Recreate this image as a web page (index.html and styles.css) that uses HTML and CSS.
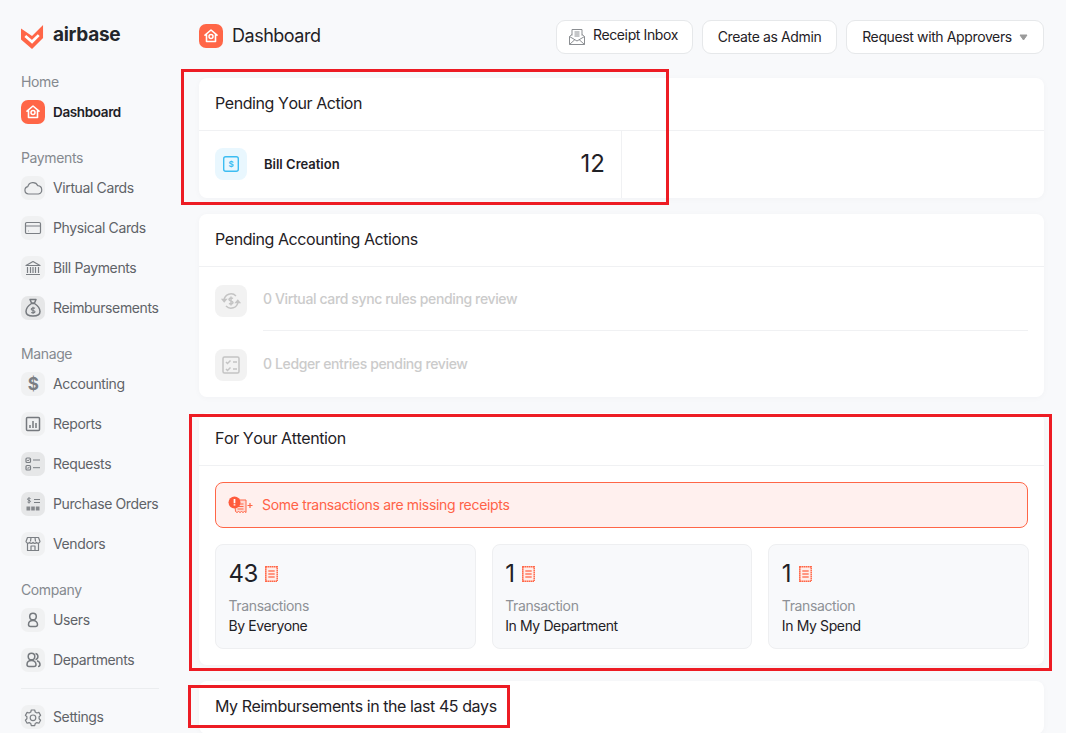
FILE: index.html
```html
<!DOCTYPE html>
<html lang="en">
<head>
<meta charset="utf-8">
<title>Airbase Dashboard</title>
<link rel="stylesheet" href="styles.css">
</head>
<body>
<svg class="defs" width="0" height="0" aria-hidden="true">
  <defs>
    <symbol id="i-home" viewBox="0 0 24 24">
      <path d="M6 11.2 12 6l6 5.200M7.500 10.500V17.500H16.500V10.500" fill="none" stroke="#fff" stroke-width="1.600" stroke-linejoin="round" stroke-linecap="round"/>
      <circle cx="12" cy="12.500" r="2" fill="none" stroke="#fff" stroke-width="1.500"/>
    </symbol>
    <symbol id="i-receipt" viewBox="0 0 13 16">
      <path d="M.8.8h11.400v14.400H.8Z" fill="#ffeeea" stroke="#ff6647" stroke-width="1.500" stroke-dasharray="1.600 .4"/>
      <path d="M3.300 5h6.400M3.300 8h6.400M3.300 11h6.400" stroke="#ff7a5f" stroke-width="1.300" fill="none"/>
    </symbol>
  </defs>
</svg>
<div class="app">
  <aside class="sidebar">
    <div class="brand">
      <svg class="brand-mark" viewBox="0 0 24 26"><path d="M0 3.500 11.500 11.500 23 0V13.500L11.500 25 0 15Z" fill="#ff6647"/><path d="M4.500 11.500 11.500 17.500 18.500 10.500" fill="none" stroke="#fff" stroke-width="2.800"/></svg>
      <span class="brand-name">airbase</span>
    </div>

    <div class="nav-label">Home</div>
    <a class="nav-item active"><span class="nav-icon accent"><svg viewBox="0 0 24 24"><use href="#i-home"/></svg></span>Dashboard</a>

    <div class="nav-label spaced">Payments</div>
    <a class="nav-item"><span class="nav-icon"><svg viewBox="0 0 24 24"><path d="M7.500 18a3.700 3.700 0 0 1-.7-7.300 5.300 5.300 0 0 1 10-1 4.200 4.200 0 0 1 .6 8.300Z"/></svg></span>Virtual Cards</a>
    <a class="nav-item"><span class="nav-icon"><svg viewBox="0 0 24 24"><rect x="4.500" y="6.500" width="15" height="11" rx="1.200"/><path d="M4.500 10h15M7 15h.6"/></svg></span>Physical Cards</a>
    <a class="nav-item"><span class="nav-icon"><svg viewBox="0 0 24 24"><path d="M5 9.500 12 5.500l7 4ZM6.500 11v6M9.500 11v6M12 11v6M14.500 11v6M17.500 11v6M5 18.500h14"/></svg></span>Bill Payments</a>
    <a class="nav-item"><span class="nav-icon dark"><svg class="bold" viewBox="0 0 24 24"><path d="M9 3.500h6l-1.500 3.500h-3ZM10.500 7.500C7.500 9.500 5 12.500 5 15.500c0 3 2.500 4.500 7 4.500s7-1.500 7-4.500c0-3-2.500-6-5.500-8Z"/><path d="M14 12.300c-1.500-.8-3.800-.3-3.800.9 0 1.700 3.800.9 3.800 2.600 0 1.100-2.200 1.500-3.800.7M12 10.800v7" stroke-width="1.100"/></svg></span>Reimbursements</a>

    <div class="nav-label spaced">Manage</div>
    <a class="nav-item"><span class="nav-icon"><span class="dollar">$</span></span>Accounting</a>
    <a class="nav-item"><span class="nav-icon"><svg class="bold" viewBox="0 0 24 24"><rect x="5.500" y="5.500" width="13" height="13" rx="1"/><path d="M9 16v-3M12 16V9M15 16v-5"/></svg></span>Reports</a>
    <a class="nav-item"><span class="nav-icon dark"><svg viewBox="0 0 24 24"><rect x="5" y="6" width="4.500" height="4.500" rx="1"/><rect x="5" y="13.500" width="4.500" height="4.500" rx="1"/><path d="M6.200 8.200l.8.800 1.400-1.600M6.200 15.700l.8.800 1.400-1.600M12 8h7M12 15.700h7" stroke-width="1"/></svg></span>Requests</a>
    <a class="nav-item"><span class="nav-icon dark"><svg viewBox="0 0 24 24"><path d="M13 7.500h6M13 10.500h6" /><path d="M9.500 6.500c-1-.7-3-.5-3 .7 0 1.500 3 .8 3 2.200 0 1-2 1.300-3 .6M8 5.500v6" stroke-width="1"/><path class="solid" d="M5.500 14.500h3.700v4H5.500ZM10.200 14.500h3.600v4h-3.600ZM14.800 14.500h3.700v4h-3.700Z"/></svg></span>Purchase Orders</a>
    <a class="nav-item"><span class="nav-icon"><svg viewBox="0 0 24 24"><path d="M6.500 5.500h11l1.500 4a2 2 0 0 1-3.500 1 2.300 2.300 0 0 1-3.500 0 2.300 2.300 0 0 1-3.500 0 2 2 0 0 1-3.500-1ZM6.500 11.500v7h11v-7M10 18.500V14h4v4.500M10 5.500 9.500 9.500M14 5.500l.5 4"/></svg></span>Vendors</a>

    <div class="nav-label spaced">Company</div>
    <a class="nav-item"><span class="nav-icon"><svg class="bold" viewBox="0 0 24 24"><circle cx="12" cy="8.500" r="3.300"/><path d="M12 12.500c-3 0-4.500 1.800-4.500 4 0 1.300.7 2 2 2h5c1.300 0 2-.7 2-2 0-2.200-1.500-4-4.500-4Z"/></svg></span>Users</a>
    <a class="nav-item"><span class="nav-icon"><svg class="bold" viewBox="0 0 24 24"><circle cx="10.500" cy="8.500" r="3.300"/><path d="M10.500 12.500c-3 0-4.500 1.800-4.500 4 0 1.300.7 2 2 2h5c1.300 0 2-.7 2-2 0-2.200-1.500-4-4.500-4ZM14.500 5.500a3.200 3.200 0 0 1 0 6.200M16 12.800c2 .6 3 2 3 3.700 0 1.300-.6 2-2 2"/></svg></span>Departments</a>

    <div class="nav-rule"></div>
    <a class="nav-item"><span class="nav-icon"><svg viewBox="0 0 24 24"><path d="M10.300 5h3.400l.5 2 1.700 1 2-.6 1.700 3-1.500 1.400v2l1.500 1.400-1.700 3-2-.6-1.700 1-.5 2h-3.400l-.5-2-1.700-1-2 .6-1.700-3 1.500-1.400v-2L4.400 10.400l1.700-3 2 .6 1.700-1Z"/><circle cx="12" cy="12.800" r="2.800"/></svg></span>Settings</a>
  </aside>

  <main class="main">
    <header class="topbar">
      <div class="page-title">
        <span class="nav-icon accent"><svg viewBox="0 0 24 24"><use href="#i-home"/></svg></span>
        <h1>Dashboard</h1>
      </div>
      <div class="actions">
        <button class="btn btn-inbox">
          <svg class="btn-icon" viewBox="0 0 18 18"><path d="M4 7.500V1.500h10v6M6.500 4h5M6.500 6h5M6.500 8h5M4 6.500 1.500 8.500v8h15v-8L14 6.500M1.500 8.500 9 13l7.500-4.500M1.500 16.500 7 11.500M16.500 16.500 11 11.500"/></svg>
          <span class="btn-lifted">Receipt Inbox</span>
        </button>
        <button class="btn btn-admin">Create as Admin</button>
        <button class="btn btn-request">Request with Approvers<svg class="caret" viewBox="0 0 9 7"><path d="M1 1h7L4.500 6Z"/></svg></button>
      </div>
    </header>

    <section class="card">
      <h2 class="card-head">Pending Your Action</h2>
      <div class="action-row">
        <div class="action-cell">
          <span class="tile tile-blue"><svg viewBox="0 0 32 32"><rect x="8.700" y="8.700" width="14.600" height="14.600" rx="2" fill="none" stroke="#3dbdf2" stroke-width="1.400"/><text x="16" y="19" class="tile-dollar">$</text></svg></span>
          <span class="action-name">Bill Creation</span>
          <span class="action-count">12</span>
        </div>
      </div>
    </section>

    <section class="card">
      <h2 class="card-head">Pending Accounting Actions</h2>
      <div class="todo-list">
        <div class="todo">
          <span class="tile tile-grey"><svg viewBox="0 0 32 32"><path d="M9 15a7 7 0 0 1 12-4M23 17a7 7 0 0 1-12 4"/><path class="tile-fill" d="M7.500 14.500h3.500l-1.800 2ZM24.500 17.500H21l1.800-2Z"/><path d="M18 13.500c-1-.8-4-.8-4 .9 0 2 4 1.100 4 3.100 0 1.700-3 1.700-4 .9M16 11.500v9"/></svg></span>
          <span class="todo-text">0 Virtual card sync rules pending review</span>
        </div>
        <div class="todo">
          <span class="tile tile-grey"><svg viewBox="0 0 32 32"><rect x="8" y="8" width="16" height="16" rx="1.500"/><path d="M11 13l1.500 1.500 3-3M11 20l1.500 1.500 3-3M18 13h4M18 20h4"/></svg></span>
          <span class="todo-text">0 Ledger entries pending review</span>
        </div>
      </div>
    </section>

    <section class="card">
      <h2 class="card-head">For Your Attention</h2>
      <div class="attention">
        <div class="alert">
          <svg class="alert-icon" viewBox="0 0 25 24"><path d="M6.500 7h11.500v12.500l-1.500-1-1.500 1-1.500-1-1.500 1-1.500-1-1.500 1-1.500-1Z" fill="#ffd9d2" stroke="#ff6647"/><path d="M9.500 11h6M9.500 13.500h6M9.500 16h6" stroke="#ff6647"/><circle cx="6.500" cy="9.500" r="6" fill="#ff5a3c"/><path d="M6.500 6v4.200M6.500 11.200v1.300" stroke="#fff" stroke-width="1.700"/><path d="M19.500 12.500h5M22 10v5" stroke="#ff6647" stroke-width="1.200"/></svg>
          <span class="alert-text">Some transactions are missing receipts</span>
        </div>
        <div class="stats">
          <div class="stat">
            <div class="stat-top"><span class="stat-num">43</span><svg class="receipt" viewBox="0 0 13 16"><use href="#i-receipt"/></svg></div>
            <div class="stat-label">Transactions</div>
            <div class="stat-scope">By Everyone</div>
          </div>
          <div class="stat">
            <div class="stat-top"><span class="stat-num">1</span><svg class="receipt" viewBox="0 0 13 16"><use href="#i-receipt"/></svg></div>
            <div class="stat-label">Transaction</div>
            <div class="stat-scope">In My Department</div>
          </div>
          <div class="stat">
            <div class="stat-top"><span class="stat-num">1</span><svg class="receipt" viewBox="0 0 13 16"><use href="#i-receipt"/></svg></div>
            <div class="stat-label">Transaction</div>
            <div class="stat-scope">In My Spend</div>
          </div>
        </div>
      </div>
    </section>

    <section class="card">
      <h2 class="card-head">My Reimbursements in the last 45 days</h2>
    </section>
  </main>
</div>

<div class="mark mark-one"></div>
<div class="mark mark-two"></div>
<div class="mark mark-three"></div>
</body>
</html>
```

FILE: styles.css
```css
* { box-sizing: border-box; letter-spacing: -.027em; }

html, body {
  margin: 0;
  height: 733px;
  overflow: hidden;
}

body {
  position: relative;
  background: #f8f9fb;
  color: #1f2126;
  font-family: "Inter", "Liberation Sans", sans-serif;
  font-size: 14px;
}

.defs { position: absolute; }

.app { display: flex; align-items: flex-start; }

.sidebar {
  width: 199px;
  flex: none;
  padding: 24px 40px 0 21px;
}

.brand {
  display: flex;
  align-items: center;
  gap: 9px;
  height: 26px;
  margin-bottom: 22px;
}

.brand-mark { width: 23px; height: 25px; flex: none; }

.brand-name {
  font-size: 19px;
  font-weight: 700;
  line-height: 20px;
  letter-spacing: -.015em;
  color: #23262b;
  position: relative;
  top: -2px;
}

.nav-label {
  height: 20px;
  line-height: 20px;
  color: #85898f;
}

.nav-label.spaced { margin-top: 16px; }

.nav-item {
  display: flex;
  align-items: center;
  gap: 8px;
  height: 40px;
  padding-bottom: 2px;
  white-space: nowrap;
  color: #5f6368;
}

.nav-item.active {
  padding-bottom: 0;
  color: #1f2126;
  font-size: 13.500px;
  font-weight: 600;
}

.nav-icon {
  width: 24px;
  height: 24px;
  flex: none;
  margin-top: 2px;
  border-radius: 7px;
  background: #f0f1f2;
  display: flex;
  align-items: center;
  justify-content: center;
}

.nav-icon.dark { background: #e6e7e8; }
.nav-icon.accent { background: #ff6647; }
.nav-item.active .nav-icon { margin-top: 0; }

.nav-icon svg {
  width: 24px;
  height: 24px;
  fill: none;
  stroke: #7b7f84;
  stroke-width: 1.200;
  stroke-linejoin: round;
}

.nav-icon svg.bold { stroke-width: 1.500; stroke: #75797e; }

.nav-icon svg .solid { fill: #85888c; stroke: none; }

.dollar {
  font-size: 17px;
  font-weight: 700;
  color: #7b7f84;
  line-height: 24px;
}

.nav-rule {
  height: 1px;
  background: #ebedef;
  margin: 8px 0;
}

.main {
  width: 845px;
  flex: none;
}

.topbar {
  display: flex;
  align-items: center;
  justify-content: space-between;
  height: 34px;
  margin: 20px 0 24px;
}

.page-title {
  display: flex;
  align-items: center;
  gap: 9px;
  margin-bottom: 2px;
}

.page-title .nav-icon { margin-top: 0; }

.page-title h1 {
  margin: 0 0 2px;
  font-size: 18px;
  font-weight: 400;
  color: #1f2126;
}

.actions { display: flex; gap: 9px; }

.btn {
  height: 34px;
  padding: 0 0 2px;
  border: 1px solid #e6e8ea;
  border-radius: 9px;
  background: #fff;
  color: #1f2126;
  font: inherit;
  display: flex;
  align-items: center;
  justify-content: center;
}

.btn-inbox {
  width: 137px;
  gap: 7px;
  padding-left: 11px;
  justify-content: flex-start;
}

.btn-admin { width: 135px; }
.btn-request { width: 198px; }

.btn-lifted { position: relative; top: -2px; }

.btn-icon {
  width: 18px;
  height: 18px;
  margin-top: 2px;
  fill: none;
  stroke: #8b8e92;
  stroke-width: 1;
  flex: none;
}

.caret {
  width: 9px;
  height: 7px;
  margin: 2px 0 0 7px;
  fill: #9a9a9a;
  stroke: #9a9a9a;
  stroke-width: 1;
  stroke-linejoin: round;
}

.card {
  background: #fff;
  border-radius: 8px;
  box-shadow: 0 1px 6px rgba(30, 40, 60, .03);
  margin-bottom: 16px;
}

.card-head {
  margin: 0;
  height: 53px;
  padding: 0 0 2px 16px;
  display: flex;
  align-items: center;
  font-size: 16px;
  font-weight: 400;
  font-kerning: none;
  color: #1f2126;
  border-bottom: 1px solid #f0f1f3;
}

.action-row { display: flex; height: 67px; }

.action-cell {
  width: 423px;
  display: flex;
  align-items: flex-start;
  padding: 17px 16px 0;
  border-right: 1px solid #f0f1f3;
}

.tile {
  width: 32px;
  height: 32px;
  border-radius: 8px;
  flex: none;
  display: block;
}

.tile svg { width: 32px; height: 32px; display: block; }

.tile-blue { background: #e9f7fe; }

.tile-dollar {
  font-size: 8px;
  font-weight: 700;
  fill: #3dbdf2;
  text-anchor: middle;
}

.tile-grey { background: #f2f2f2; margin-top: 18px; }

.tile-grey svg {
  fill: none;
  stroke: #c4c4c4;
  stroke-width: 1.500;
}

.tile-grey svg .tile-fill { fill: #c4c4c4; }

.action-name {
  margin-left: 17px;
  font-size: 13px;
  line-height: 32px;
  font-weight: 600;
  letter-spacing: 0;
  color: #1f2126;
  flex: 1;
}

.action-count {
  font-size: 24px;
  line-height: 32px;
  letter-spacing: 0;
  color: #1f2126;
}

.todo-list { padding: 0 16px; }

.todo {
  display: flex;
  align-items: flex-start;
  height: 66px;
}

.todo:first-child { height: 64px; }

.todo-text {
  flex: 1;
  margin-left: 16px;
  font-weight: 500;
  color: #cbcbcb;
  line-height: 66px;
  height: 64px;
}

.todo:first-child .todo-text {
  line-height: 64px;
  border-bottom: 1px solid #f0f1f3;
}

.attention { padding: 16px 15px 16px 16px; }

.alert {
  height: 46px;
  margin-right: 1px;
  display: flex;
  align-items: center;
  gap: 9px;
  padding-left: 12px;
  border: 1px solid #ff6647;
  border-radius: 8px;
  background: #fff0ee;
  color: #ff6247;
}

.alert-text { margin-bottom: 2px; letter-spacing: -.023em; }

.alert-icon {
  width: 25px;
  height: 24px;
  fill: none;
  flex: none;
}

.stats {
  display: grid;
  grid-template-columns: repeat(3, 1fr);
  gap: 16px;
  margin-top: 16px;
}

.stat {
  height: 105px;
  padding: 14px 13px 0 12.500px;
  border: 1px solid #eeeff1;
  border-radius: 8px;
  background: #f8f9fb;
}

.stat-top {
  display: flex;
  align-items: center;
  gap: 7px;
  height: 30px;
  margin-bottom: 7px;
}

.stat-num {
  min-width: 10px;
  font-size: 24px;
  line-height: 30px;
  letter-spacing: -.02em;
  color: #1f2126;
}

.receipt { width: 13px; height: 16px; flex: none; }

.stat-label {
  line-height: 20px;
  color: #8e9196;
}

.stat-scope {
  line-height: 20px;
  color: #1f2126;
}

.mark {
  position: absolute;
  border: 3px solid #ed1c24;
  pointer-events: none;
}

.mark-one { left: 181px; top: 69px; width: 488px; height: 136px; }
.mark-two { left: 189px; top: 414px; width: 863px; height: 257px; }
.mark-three { left: 188px; top: 685px; width: 322px; height: 43px; }
```
